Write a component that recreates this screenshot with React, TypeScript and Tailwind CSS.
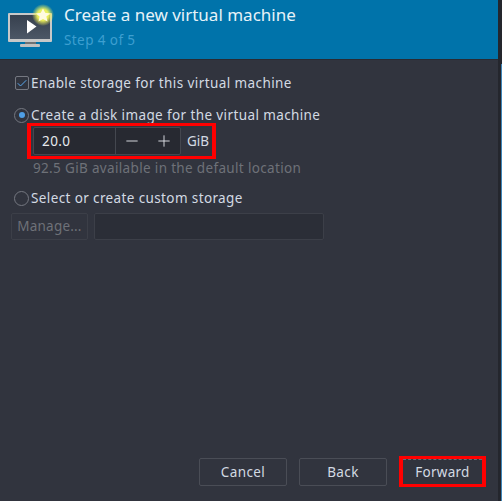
import React from 'react';
import { Check, Minus, Plus } from 'lucide-react';

function MachineIcon() {
  return (
    <svg width="58" height="50" viewBox="0 0 58 50" className="shrink-0 overflow-visible">
      <defs>
        <radialGradient id="glow">
          <stop offset="0.5" stopColor="#f4f65a" stopOpacity="0.95" />
          <stop offset="1" stopColor="#f4f65a" stopOpacity="0" />
        </radialGradient>
        <linearGradient id="screen" x1="0" y1="0" x2="0" y2="1">
          <stop offset="0" stopColor="#37404e" />
          <stop offset="1" stopColor="#4c5766" />
        </linearGradient>
      </defs>
      <rect x="8" y="5" width="44" height="29" rx="1" fill="#c8c8c8" />
      <rect x="10" y="7" width="40" height="24" fill="url(#screen)" />
      <rect x="25" y="34" width="11" height="3" fill="#6f7275" />
      <rect x="20" y="36" width="20" height="3" rx="1" fill="#c0c0c0" />
      <path d="M27 12 L36.5 18.5 L27 25.5 Z" fill="#ffffff" />
      <circle cx="43" cy="7" r="11" fill="url(#glow)" />
      <path d="M43 0.5 L45.2 4.8 L50 5.4 L46.4 8.6 L47.5 13.5 L43 11 L38.5 13.5 L39.6 8.6 L36 5.4 L40.8 4.8 Z" fill="#fffbe0" />
    </svg>
  );
}

export default function App() {
  return (
    <div className="flex h-[501px] w-[502px] overflow-hidden bg-[#24262d]">
      <div className="flex h-full w-[498px] flex-col bg-[#31343e] font-['Noto_Sans',sans-serif] text-[13.5px] tracking-[0.41px] text-[#d3dae3]">
        <header className="flex h-[59px] shrink-0 items-start gap-[6px] bg-[#0073aa]">
          <div className="pt-[8px]">
            <MachineIcon />
          </div>
          <div className="flex flex-col pt-[3px]">
            <span className="text-[17px] leading-[24px] tracking-normal text-[#e6f2f8]">Create a new virtual machine</span>
            <span className="mt-[1px] leading-[24px] text-[#3d9fd0]">Step 4 of 5</span>
          </div>
        </header>

        <main className="flex flex-1 flex-col border-t border-[#292b33] pl-[11px] pt-[13px]">
          <label className="flex h-[20px] items-center gap-[2px] pl-[4px]">
            <span className="flex h-[14px] w-[14px] items-center justify-center rounded-[2px] border border-[#757881]">
              <Check size={13} strokeWidth={2} className="text-[#5aa9ef]" />
            </span>
            <span>Enable storage for this virtual machine</span>
          </label>

          <label className="mt-[12px] flex h-[20px] items-center gap-[2px] pl-[3px]">
            <span className="flex h-[15px] w-[15px] items-center justify-center rounded-full border border-[#757881]">
              <span className="h-[6px] w-[6px] rounded-full bg-[#4f9fe6]" />
            </span>
            <span className="tracking-[0.39px]">Create a disk image for the virtual machine</span>
          </label>

          <div className="ml-[16px] mt-[-2px] flex h-[36px] w-[189px] items-center border-x-4 border-y-[3px] border-[#ff0000] pl-[2px]">
            <div className="flex h-[28px] w-[148px] shrink-0 items-stretch rounded-[2px] border border-[#44474f] bg-[#272931]">
              <span className="flex w-[81px] items-center pl-[8px] text-[#e6e9ee]">20.0</span>
              <span className="flex w-[32px] items-center justify-center border-l border-[#44474f] text-[#e6e9ee]">
                <Minus size={18} strokeWidth={1.2} />
              </span>
              <span className="flex flex-1 items-center justify-center text-[#e6e9ee]">
                <Plus size={18} strokeWidth={1.2} />
              </span>
            </div>
            <span className="ml-[6px] tracking-normal">GiB</span>
          </div>

          <p className="ml-[22px] mt-[-1px] h-[20px] leading-[20px] tracking-[0.34px] text-[#6e7178]">92.5 GiB available in the default location</p>

          <label className="mt-[10px] flex h-[20px] items-center gap-[2px] pl-[3px]">
            <span className="h-[15px] w-[15px] rounded-full border border-[#757881]" />
            <span className="tracking-[0.38px]">Select or create custom storage</span>
          </label>

          <div className="mt-[5px] flex h-[27px] gap-[6px]">
            <button className="w-[77px] rounded-[2px] border border-[#3c3f48] tracking-[0.2px] text-[#6e7178]">Manage...</button>
            <div className="w-[230px] rounded-[2px] border border-[#3c3f48] bg-[#2b2e37]" />
          </div>
        </main>

        <footer className="flex h-[47px] shrink-0 items-start gap-[12px] pl-[199px] pt-[2px]">
          <button className="mt-[2px] h-[28px] w-[88px] rounded-[2px] border border-[#4a4d56]">Cancel</button>
          <button className="mt-[2px] h-[28px] w-[88px] rounded-[2px] border border-[#4a4d56]">Back</button>
          <button className="h-[31px] w-[87px] border-x-4 border-y-[3px] border-[#ff0000]">
            <span className="flex h-full w-full items-center justify-center border-t border-dashed border-[#686b73] tracking-[0.25px]">Forward</span>
          </button>
        </footer>
      </div>
      <div className="ml-auto mt-[64px] h-[437px] w-[1px] bg-[#3f86b8]" />
    </div>
  );
}
